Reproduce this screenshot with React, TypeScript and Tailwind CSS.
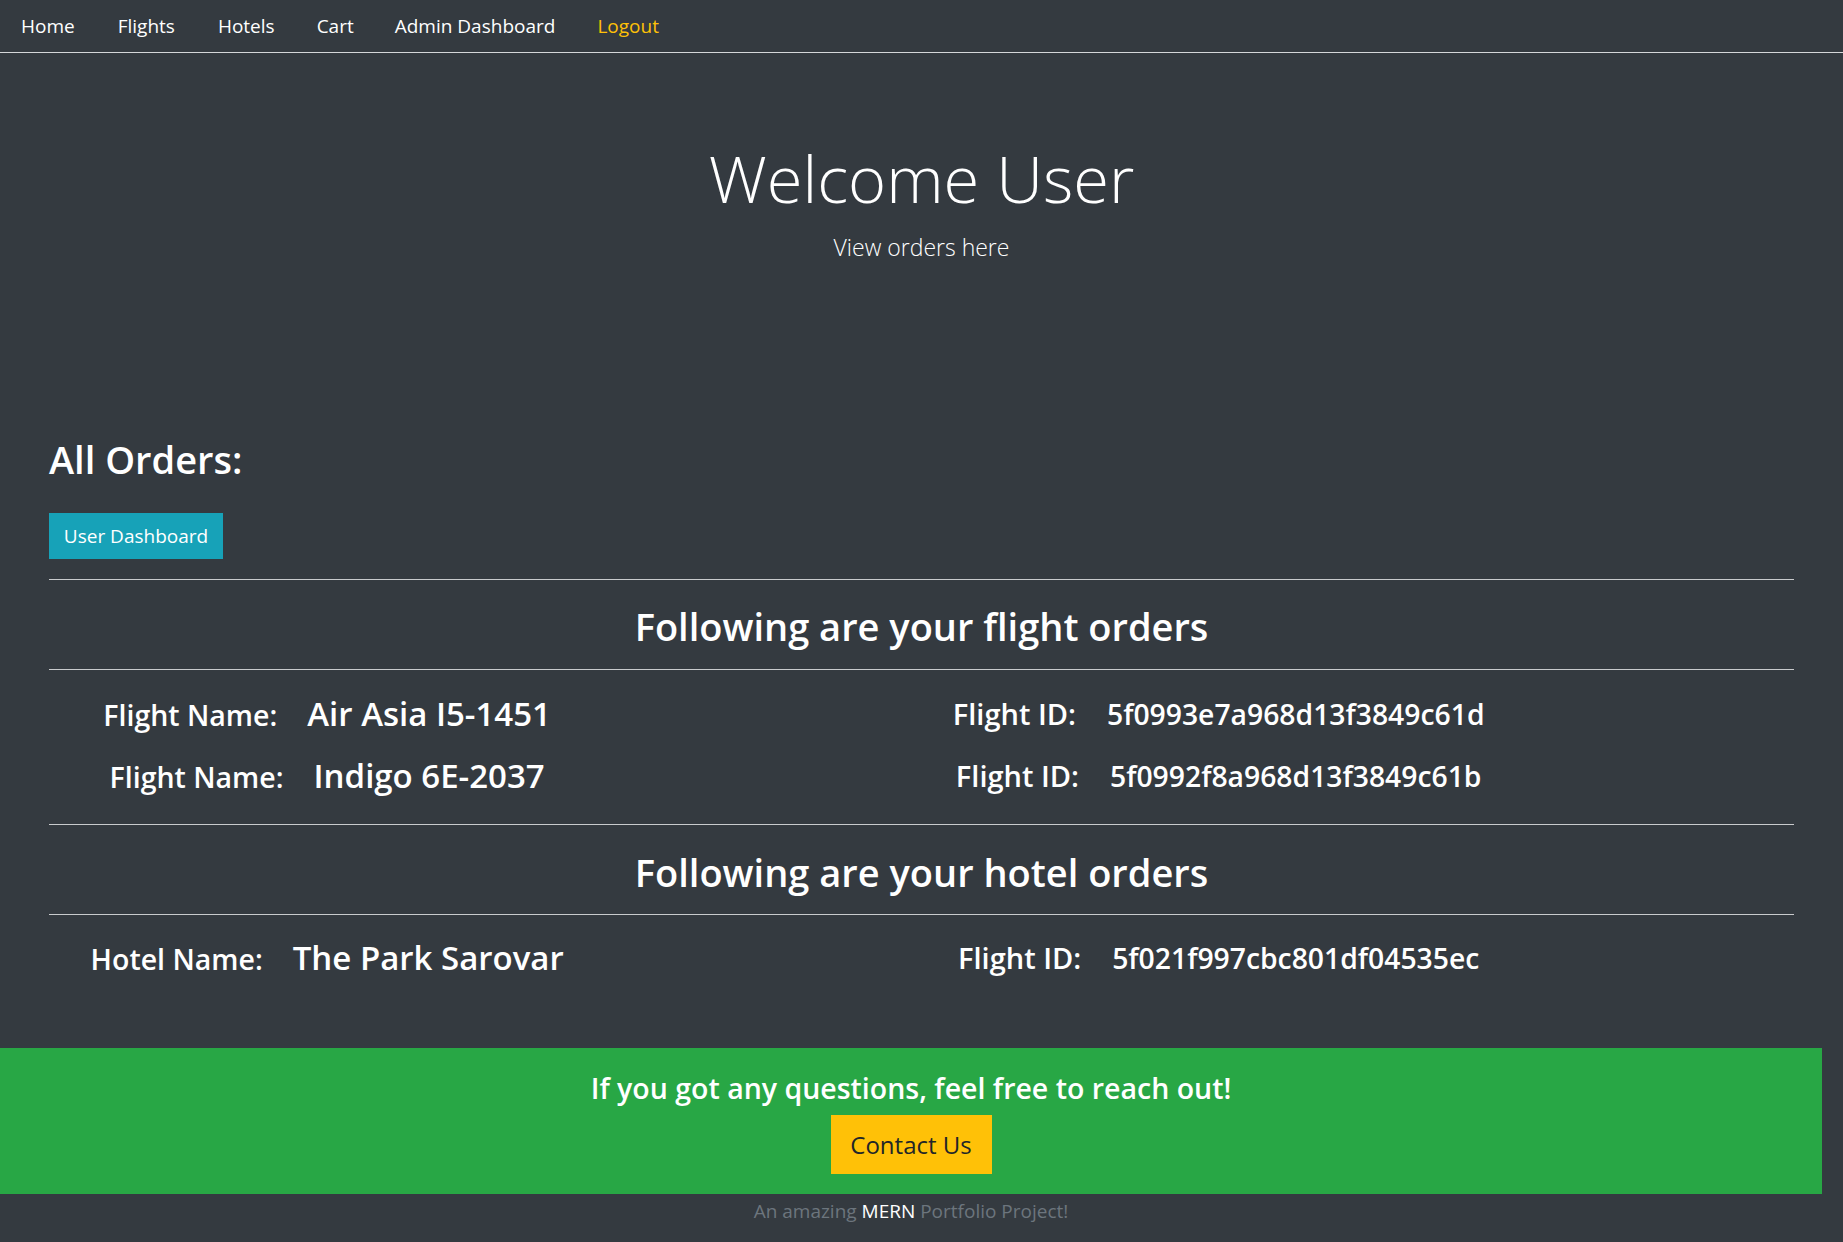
import React from 'react'

const NAV_LINKS = [
  { label: 'Home', ml: 'ml-0' },
  { label: 'Flights', ml: 'ml-[43px]' },
  { label: 'Hotels', ml: 'ml-[43px]' },
  { label: 'Cart', ml: 'ml-[42px]' },
  { label: 'Admin Dashboard', ml: 'ml-[41px]' },
]

const FLIGHTS = [
  { name: 'Air Asia I5-1451', id: '5f0993e7a968d13f3849c61d' },
  { name: 'Indigo 6E-2037', id: '5f0992f8a968d13f3849c61b' },
]

const OrderRow = ({ label, name, id }: { label: string; name: string; id: string }) => (
  <div className="grid h-[62px] grid-cols-3 items-center">
    <div className="flex items-baseline justify-center">
      <span className="text-[28.5px] font-semibold">{label}</span>
      <span className="ml-[30px] text-[33px] font-semibold">{name}</span>
    </div>
    <div className="col-span-2 flex items-baseline justify-center">
      <span className="text-[29px] font-semibold">Flight ID:</span>
      <span className="ml-[31px] text-[28.3px] font-semibold">{id}</span>
    </div>
  </div>
)

export default function App() {
  return (
    <div className="min-h-[1242px] bg-[#343a40] font-['Open_Sans',sans-serif] text-white">
      {/* Navbar */}
      <nav className="flex h-[53px] items-center border-b border-[#d5d7d9] pl-[21px] text-[19px]">
        {NAV_LINKS.map((l) => (
          <a key={l.label} className={`${l.ml} text-white`}>
            {l.label}
          </a>
        ))}
        <a className="ml-[42px] text-[#ffc107]">Logout</a>
      </nav>

      {/* Jumbotron */}
      <header className="pt-[83px] text-center">
        <h1 className="text-[65px] leading-[84px] font-light">Welcome User</h1>
        <p className="mt-[8px] text-[23px] leading-[38px] font-light">View orders here</p>
      </header>

      <main className="px-[49px]">
        <h2 className="mt-[169px] text-[38px] leading-[48px] font-semibold">All Orders:</h2>
        <button className="mt-[30px] h-[46px] w-[174px] bg-[#17a2b8] text-[19px] text-white">
          User Dashboard
        </button>

        <hr className="mt-[20px] border-t border-[#c9cbcd]" />
        <h3 className="mt-[25px] text-center text-[38px] leading-[42px] font-semibold">
          Following are your flight orders
        </h3>
        <hr className="mt-[22px] border-t border-[#c9cbcd]" />

        <div className="mx-[-19px] mt-[13px]">
          {FLIGHTS.map((f) => (
            <OrderRow key={f.id} label="Flight Name:" name={f.name} id={f.id} />
          ))}
        </div>

        <hr className="mt-[17px] border-t border-[#c9cbcd]" />
        <h3 className="mt-[26px] text-center text-[38px] leading-[42px] font-semibold">
          Following are your hotel orders
        </h3>
        <hr className="mt-[21px] border-t border-[#c9cbcd]" />

        <div className="mx-[-19px] mt-[12px]">
          <OrderRow label="Hotel Name:" name="The Park Sarovar" id="5f021f997cbc801df04535ec" />
        </div>
      </main>

      {/* Contact strip */}
      <section className="mt-[59px] flex h-[146px] w-[1822px] flex-col items-center bg-[#28a745] pt-[22px]">
        <h4 className="text-[28.5px] leading-[36px] font-semibold">
          If you got any questions, feel free to reach out!
        </h4>
        <button className="mt-[9px] h-[59px] w-[161px] bg-[#ffc107] text-[24px] text-[#212529]">
          Contact Us
        </button>
      </section>

      <footer className="w-[1822px] pt-[2px] text-center text-[19px] leading-[30px] text-[#6c757d]">
        An amazing <span className="text-white">MERN</span> Portfolio Project!
      </footer>
    </div>
  )
}
